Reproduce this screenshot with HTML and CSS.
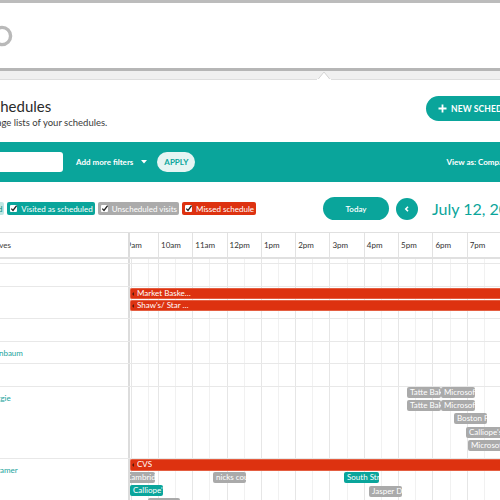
FILE: index.html
```html
<!DOCTYPE html>
<html>
<head>
<meta charset="utf-8">
<link rel="stylesheet" href="styles.css">
</head>
<body>
<div class="topline"></div>
<header class="appbar">
  <svg class="logo" width="24" height="24" viewBox="0 0 24 24"><circle cx="12" cy="12" r="8.6" fill="none" stroke="#b9b9b9" stroke-width="3.4"/></svg>
</header>
<nav class="subnav">
  <svg class="notch" width="14" height="9" viewBox="0 0 14 9"><polygon points="0.5,9 7,1 13.5,9" fill="#fff" stroke="#d4d4d4" stroke-width="1"/><rect x="0" y="8" width="14" height="1" fill="#fff"/></svg>
</nav>

<section class="titlebar">
  <div class="titles">
    <h1 class="title">Schedules</h1>
    <p class="subtitle">Manage lists of your schedules.</p>
  </div>
  <button class="new-btn"><svg width="9" height="9" viewBox="0 0 9 9"><path d="M4.5 0.5V8.5M0.5 4.5H8.5" stroke="#fff" stroke-width="1.8"/></svg><span>NEW SCHEDULE</span></button>
</section>

<section class="filterbar">
  <div class="search"></div>
  <span class="more">Add more filters</span>
  <svg class="caret" width="6" height="4" viewBox="0 0 6 4"><polygon points="0,0 6,0 3,3.5" fill="#fff"/></svg>
  <button class="apply">APPLY</button>
  <span class="viewas">View as: Compact</span>
</section>

<section class="controls">
  <div class="legend">
    <span class="chip chip-sched"><svg class="cb" width="7" height="7" viewBox="0 0 7 7"><rect width="7" height="7" rx="1" fill="#fff"/><path d="M1.3 3.6L3 5.4L6.6 0.6" fill="none" stroke="#222" stroke-width="1.3"/></svg>Scheduled</span>
    <span class="chip chip-visited"><svg class="cb" width="7" height="7" viewBox="0 0 7 7"><rect width="7" height="7" rx="1" fill="#fff"/><path d="M1.3 3.6L3 5.4L6.6 0.6" fill="none" stroke="#222" stroke-width="1.3"/></svg>Visited as scheduled</span>
    <span class="chip chip-unsched"><svg class="cb" width="7" height="7" viewBox="0 0 7 7"><rect width="7" height="7" rx="1" fill="#fff"/><path d="M1.3 3.6L3 5.4L6.6 0.6" fill="none" stroke="#222" stroke-width="1.3"/></svg>Unscheduled visits</span>
    <span class="chip chip-missed"><svg class="cb" width="7" height="7" viewBox="0 0 7 7"><rect width="7" height="7" rx="1" fill="#fff"/><path d="M1.3 3.6L3 5.4L6.6 0.6" fill="none" stroke="#222" stroke-width="1.3"/></svg>Missed schedule</span>
  </div>
  <div class="nav">
    <button class="today">Today</button>
    <button class="back"><svg width="8" height="8" viewBox="0 0 8 8"><path d="M5 1.8L2.8 4L5 6.2" fill="none" stroke="#fff" stroke-width="1.6"/></svg></button>
    <span class="date">July 12, 2018</span>
  </div>
</section>

<section class="table">
  <div class="row head">
    <div class="name-cell"><span class="name head-name">Executives</span></div>
    <div class="time-cell head-time">
      <div class="hours">
        <span class="hour">9am</span><span class="hour">10am</span><span class="hour">11am</span><span class="hour">12pm</span><span class="hour">1pm</span><span class="hour">2pm</span><span class="hour">3pm</span><span class="hour">4pm</span><span class="hour">5pm</span><span class="hour">6pm</span><span class="hour">7pm</span>
      </div>
    </div>
  </div>
  <div class="row spacer">
    <div class="name-cell"></div>
    <div class="time-cell grid"></div>
  </div>
  <div class="row h23">
    <div class="name-cell"></div>
    <div class="time-cell grid"></div>
  </div>
  <div class="row h32">
    <div class="name-cell"></div>
    <div class="time-cell grid">
      <div class="ev ev-red cont" style="left:0;top:1px;width:380px"><span class="lbl">Market Basket #42</span></div>
      <div class="ev ev-red cont" style="left:0;top:13px;width:380px"><span class="lbl">Shaw's/ Star Market</span></div>
    </div>
  </div>
  <div class="row h23">
    <div class="name-cell"></div>
    <div class="time-cell grid"></div>
  </div>
  <div class="row h22">
    <div class="name-cell"><span class="name">Tannenbaum</span></div>
    <div class="time-cell grid"></div>
  </div>
  <div class="row h23">
    <div class="name-cell"></div>
    <div class="time-cell grid"></div>
  </div>
  <div class="row h72">
    <div class="name-cell"><span class="name">Al Reggie</span></div>
    <div class="time-cell grid">
      <div class="ev ev-gray" style="left:277px;top:0;width:34px">Tatte Bakery</div>
      <div class="ev ev-gray" style="left:311px;top:0;width:34px">Microsoft</div>
      <div class="ev ev-gray" style="left:277px;top:13px;width:34px">Tatte Bakery</div>
      <div class="ev ev-gray" style="left:311px;top:13px;width:34px">Microsoft</div>
      <div class="ev ev-gray" style="left:324px;top:26px;width:33px">Boston Public</div>
      <div class="ev ev-gray" style="left:336px;top:40px;width:40px">Calliope's</div>
      <div class="ev ev-gray" style="left:338px;top:53px;width:40px">Microsoft</div>
    </div>
  </div>
  <div class="row h50">
    <div class="name-cell"><span class="name">Jim Kramer</span></div>
    <div class="time-cell grid">
      <div class="ev ev-red cont" style="left:0;top:0;width:380px;height:12px"><span class="lbl">CVS</span></div>
      <div class="ev ev-gray" style="left:-7px;top:13px;width:32px">Cambridge</div>
      <div class="ev ev-gray" style="left:83px;top:13px;width:33px">nicks court</div>
      <div class="ev ev-teal" style="left:214px;top:13px;width:35px">South Street</div>
      <div class="ev ev-teal" style="left:0;top:26px;width:33px">Calliope's</div>
      <div class="ev ev-gray" style="left:239px;top:27px;width:33px">Jasper Dr</div>
      <div class="ev ev-gray" style="left:18px;top:39px;width:32px">Union</div>
    </div>
  </div>
</section>
</body>
</html>
```

FILE: styles.css
```css
* { box-sizing: border-box; margin: 0; padding: 0; }
html, body { width: 500px; height: 500px; overflow: hidden; }
body { font-family: Lato, "Open Sans", sans-serif; background: #fff; color: #333; }
button { font-family: inherit; border: none; cursor: pointer; }

.topline { height: 3px; background: #bcbcbc; }
.appbar { height: 65px; display: flex; align-items: center; }
.logo { margin-left: -9.6px; flex: 0 0 auto; }

.subnav { position: relative; height: 12px; border-top: 3px solid #b6b6b6; background: #f0f0f0; border-bottom: 1px solid #dedede; }
.notch { position: absolute; left: 317px; bottom: -1px; }

.titlebar { height: 62px; display: flex; align-items: flex-start; padding-top: 16px; }
.titles { flex: 0 0 426px; }
.title { font-size: 15px; line-height: 18px; font-weight: 400; color: #2b2b2b; margin: 1px 0 0 -15px; }
.subtitle { font-size: 9.5px; line-height: 12px; color: #3a3a3a; margin: 2px 0 0 -22px; }
.new-btn { flex: 0 0 auto; height: 25px; border-radius: 13px; background: #0aa59b; color: #fff; display: flex; align-items: center; padding: 0 12px 0 12px; gap: 4px; font-size: 8.5px; font-weight: 700; letter-spacing: 0.1px; white-space: nowrap; }

.filterbar { height: 40px; background: #0aa59b; display: flex; align-items: center; white-space: nowrap; }
.search { flex: 0 0 113px; height: 20px; margin-left: -50px; background: #fff; border-radius: 3px; }
.more { margin-left: 13px; color: #fff; font-size: 8px; font-weight: 700; }
.caret { margin-left: 8px; flex: 0 0 auto; }
.apply { margin-left: 10px; flex: 0 0 38px; height: 20px; border-radius: 10px; background: #e6f5f3; color: #0aa59b; font-size: 8px; font-weight: 700; }
.viewas { margin-left: 251px; color: #fff; font-size: 8px; font-weight: 700; }

.controls { height: 50px; display: flex; align-items: center; padding-top: 3px; white-space: nowrap; }
.legend { display: flex; gap: 3px; margin-left: -48px; }
.chip { display: flex; align-items: center; height: 13px; border-radius: 2px; padding: 0 2px 0 3px; color: #fff; font-size: 8px; }
.cb { margin-right: 4px; flex: 0 0 auto; }
.chip-sched { background: #bfe7e3; color: #0a8c84; }
.chip-visited { background: #0aa59b; }
.chip-unsched { background: #ababab; }
.chip-missed { background: #dd3210; }
.nav { display: flex; align-items: center; margin-left: 67px; }
.today { width: 66px; height: 23px; border-radius: 12px; background: #0aa59b; color: #fff; font-size: 8px; font-weight: 600; }
.back { margin-left: 7px; width: 22px; height: 22px; border-radius: 50%; background: #0aa59b; display: flex; align-items: center; justify-content: center; }
.date { margin-left: 14px; color: #0aa59b; font-size: 16px; }

.table { border-top: 1px solid #e0e0e0; }
.row { display: flex; border-top: 1px solid #e8e8e8; }
.row.head { height: 26px; border-top: none; border-bottom: 2px solid #e0e0e0; }
.row.spacer { height: 4px; border-top: none; }
.h23 { height: 23px; }
.h22 { height: 22px; }
.h32 { height: 32px; }
.h72 { height: 72px; }
.h50 { height: 50px; }
.name-cell { flex: 0 0 130px; border-right: 2px solid #dcdcdc; overflow: hidden; white-space: nowrap; }
.name { display: block; margin-left: -22px; font-size: 8px; line-height: 22px; color: #1aa39c; }
.head-name { color: #3a3a3a; line-height: 24px; margin-left: -26.5px; }
.time-cell { flex: 1 1 auto; position: relative; overflow: hidden; }
.grid {
  background-image:
    repeating-linear-gradient(90deg, #e6e6e6 0 1px, transparent 1px 34.3px),
    repeating-linear-gradient(90deg, transparent 0 17.15px, #f1f1f1 17.15px 18.15px, transparent 18.15px 34.3px);
  background-position: 28px 0, 28px 0;
}
.hours { display: flex; margin-left: -6.3px; height: 100%; }
.hour { flex: 0 0 34.3px; border-left: 1px solid #e2e2e2; padding-left: 2px; font-size: 8px; line-height: 24px; color: #333; white-space: nowrap; }

.ev { position: absolute; height: 11px; border-radius: 2px; color: #fff; font-size: 8px; line-height: 11px; padding-left: 3px; white-space: nowrap; overflow: hidden; }
.ev-red { background: #dd3210; box-shadow: inset 0 0 0 0.5px #ec8a74; }
.ev-gray { background: #aaaaaa; }
.ev-teal { background: #0aa59b; }
.cont { padding-left: 7px; }
.cont::before { content: ""; position: absolute; left: 2px; top: 50%; margin-top: -2px; border-top: 2px solid transparent; border-bottom: 2px solid transparent; border-right: 2px solid #5a1a0a; }
.lbl { display: inline-block; max-width: 56px; overflow: hidden; text-overflow: ellipsis; vertical-align: top; }
```
